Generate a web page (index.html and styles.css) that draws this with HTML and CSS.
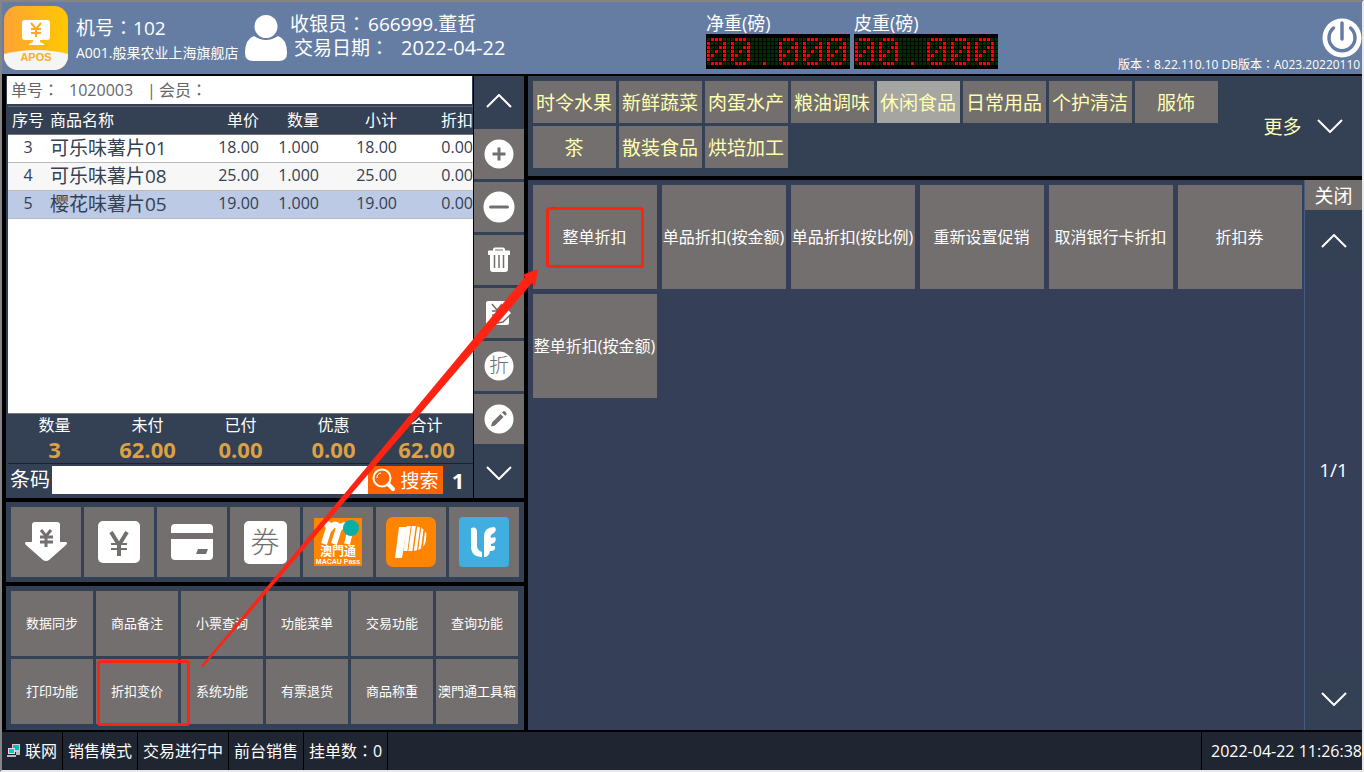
FILE: index.html
```
<!DOCTYPE html>
<html lang="zh-CN">
<head>
<meta charset="utf-8">
<title>APOS 收银台</title>
<link rel="stylesheet" href="styles.css">
</head>
<body>
<svg class="defs" width="0" height="0" aria-hidden="true">
  <defs>
    <pattern id="dots" width="4" height="4" patternUnits="userSpaceOnUse" x="1" y="4"><rect width="3" height="3" fill="#003000"/></pattern>
    <path id="zero" d="M4 0h3v3h-3zM8 0h3v3h-3zM12 0h3v3h-3zM0 4h3v3h-3zM16 4h3v3h-3zM0 8h3v3h-3zM12 8h3v3h-3zM16 8h3v3h-3zM0 12h3v3h-3zM8 12h3v3h-3zM16 12h3v3h-3zM0 16h3v3h-3zM4 16h3v3h-3zM16 16h3v3h-3zM0 20h3v3h-3zM16 20h3v3h-3zM4 24h3v3h-3zM8 24h3v3h-3zM12 24h3v3h-3z"/>
    <g id="led">
      <rect width="144" height="35" fill="#000"/>
      <rect x="1" y="4" width="143" height="28" fill="url(#dots)"/>
      <g fill="#f00"><use href="#zero" x="1" y="4"/><use href="#zero" x="25" y="4"/><rect x="57" y="28" width="3" height="3"/><use href="#zero" x="73" y="4"/><use href="#zero" x="97" y="4"/><use href="#zero" x="121" y="4"/></g>
    </g>
    <path id="chev-up" d="M1 13 13 1 25 13" fill="none" stroke="#fff" stroke-width="2"/>
    <path id="chev-down" d="M1 1 13 13 25 1" fill="none" stroke="#fff" stroke-width="2"/>
    <linearGradient id="sun"><stop offset="0" stop-color="#ffa335"/><stop offset="1" stop-color="#ffc800"/></linearGradient>
    <clipPath id="logo-clip"><rect width="64" height="64" rx="14"/></clipPath>
    <clipPath id="leaf"><path d="M19 9H30Q41 11 41 21Q39 33 27 34H16z"/></clipPath>
  </defs>
</svg>
<div class="page">
  <header class="top">
    <svg class="logo" width="64" height="64" viewBox="0 0 64 64" role="img" aria-label="APOS">
      <g clip-path="url(#logo-clip)">
        <rect width="64" height="64" fill="url(#sun)"/>
        <path d="M0 48Q32 40 64 48V64H0z" fill="#f5f5f5"/>
      </g>
      <rect x="18" y="14" width="28" height="20" rx="3" fill="#fff"/>
      <path d="M29 34h7v2l4 2v1H25v-1l4-2z" fill="#fff"/>
      <path d="M27 17l5 6 5-6M32 23v8M27 23h10M27 27h10" fill="none" stroke="#ffa91f" stroke-width="2"/>
      <text class="logo-text" x="32" y="55" text-anchor="middle">APOS</text>
    </svg>
    <div class="shop">
      <div class="big">机号<span class="colon" lang="zh-Hant">：</span>102</div>
      <div class="small">A001.般果农业上海旗舰店</div>
    </div>
    <svg class="person" width="42" height="46" viewBox="0 0 42 46" aria-hidden="true"><circle cx="21" cy="11.500" r="11.500" fill="#fff"/><path d="M9 21Q21 29 33 21Q42 24 42 38Q42 46 34 46H8Q0 46 0 38Q0 24 9 21z" fill="#fff"/></svg>
    <div class="cashier">
      <div class="big">收银员<span class="colon" lang="zh-Hant">：</span><span class="user">666999.董哲</span></div>
      <div class="big date"><span>交易日期<span class="colon" lang="zh-Hant">：</span></span><time>2022-04-22</time></div>
    </div>
    <div class="scales">
      <div><div class="scale-name">净重(磅)</div><svg width="144" height="35" role="img" aria-label="00.000"><use href="#led"/></svg></div>
      <div><div class="scale-name">皮重(磅)</div><svg width="144" height="35" role="img" aria-label="00.000"><use href="#led"/></svg></div>
    </div>
    <div class="system">
      <button class="power" aria-label="退出"><svg width="40" height="40" viewBox="0 0 40 40"><circle cx="20" cy="20" r="19.500" fill="#fff"/><path d="M11.500 10A13 13 0 1 0 28.500 10M20 5V21" fill="none" stroke="#657da2" stroke-width="3.500" stroke-linecap="round"/></svg></button>
      <div class="version">版本<span class="colon" lang="zh-Hant">：</span>8.22.110.10 DB版本<span class="colon" lang="zh-Hant">：</span>A023.20220110</div>
    </div>
  </header>

  <main class="main">
    <div class="left">
      <section class="sale">
        <div class="cart">
          <div class="order"><span>单号<span class="colon" lang="zh-Hant">：</span></span><span class="order-no">1020003</span><span>|</span><span>会员<span class="colon" lang="zh-Hant">：</span></span></div>
          <div class="goods">
            <table>
              <colgroup><col class="c-no"><col><col class="c-price"><col class="c-qty"><col class="c-sum"><col class="c-off"></colgroup>
              <thead><tr><th>序号</th><th class="name">商品名称</th><th>单价</th><th>数量</th><th>小计</th><th>折扣</th></tr></thead>
              <tbody>
                <tr><td>3</td><td class="name">可乐味薯片01</td><td>18.00</td><td>1.000</td><td>18.00</td><td>0.00</td></tr>
                <tr><td>4</td><td class="name">可乐味薯片08</td><td>25.00</td><td>1.000</td><td>25.00</td><td>0.00</td></tr>
                <tr class="selected"><td>5</td><td class="name">樱花味薯片05</td><td>19.00</td><td>1.000</td><td>19.00</td><td>0.00</td></tr>
              </tbody>
            </table>
          </div>
          <dl class="totals">
            <div><dt>数量</dt><dd>3</dd></div>
            <div><dt>未付</dt><dd>62.00</dd></div>
            <div><dt>已付</dt><dd>0.00</dd></div>
            <div><dt>优惠</dt><dd>0.00</dd></div>
            <div><dt>合计</dt><dd>62.00</dd></div>
          </dl>
          <form class="barcode">
            <label for="code">条码</label><input id="code" type="text">
            <button type="button" class="search"><svg width="24" height="24" viewBox="0 0 24 24" aria-hidden="true"><circle cx="10" cy="10" r="8.500" fill="none" stroke="#fff" stroke-width="2"/><path d="M5 10a5 5 0 0 1 4-5" fill="none" stroke="#fff"/><path d="M16.500 16.500 21 21" stroke="#fff" stroke-width="4" stroke-linecap="round"/></svg>搜索</button>
            <output>1</output>
          </form>
        </div>
        <nav class="tools">
          <button class="arrow" aria-label="上一行"><svg width="26" height="14"><use href="#chev-up"/></svg></button>
          <button aria-label="增加"><svg width="30" height="30"><circle cx="15" cy="15" r="14.500" fill="#fff"/><path d="M8.500 15h13M15 8.500v13" stroke="#736f6e" stroke-width="3"/></svg></button>
          <button aria-label="减少"><svg width="32" height="32"><circle cx="16" cy="16" r="15.500" fill="#fff"/><path d="M7.500 16h17" stroke="#736f6e" stroke-width="3" stroke-linecap="round"/></svg></button>
          <button aria-label="删除"><svg width="24" height="26" viewBox="0 0 24 26"><path d="M7 4V2.500Q7 1.500 8 1.500h8q1 0 1 1V4" fill="none" stroke="#fff" stroke-width="2"/><path d="M2 3.500h20q1 0 1 1V8H1V4.500q0-1 1-1zM3 8h18v14q0 3-3 3H6q-3 0-3-3z" fill="#fff"/><path d="M7.500 8v13M12 8v13M16.500 8v13" stroke="#736f6e" stroke-width="1.500"/></svg></button>
          <button aria-label="改价"><svg width="28" height="26" viewBox="0 0 28 26"><rect x="1" y="1" width="23" height="24" rx="2" fill="#fff"/><path d="M7 4l5 6 5-6M12 10v9M7 11h10M7 15h10" fill="none" stroke="#736f6e" stroke-width="1.500"/><path d="M12 23l2-6 9-8 4 4-9 9z" fill="#fff" stroke="#736f6e" stroke-width="1.500"/></svg></button>
          <button aria-label="折扣"><svg width="30" height="30"><circle cx="15" cy="15" r="14.500" fill="#fff"/><text class="glyph20" x="15" y="22" text-anchor="middle">折</text></svg></button>
          <button aria-label="修改"><svg width="30" height="30"><circle cx="15" cy="15" r="14.500" fill="#fff"/><path d="M7 22.500l1-4 8.500-8.500 3 3L11 21.500zM18 8.500l1-1q1-1 2 0l1.200 1.200q1 1 0 2l-1 1z" fill="#736f6e"/></svg></button>
          <button class="arrow rest" aria-label="下一行"><svg width="26" height="14"><use href="#chev-down"/></svg></button>
        </nav>
      </section>

      <section class="pay">
        <button aria-label="收款"><svg width="42" height="40" viewBox="0 0 42 40"><path d="M10 0h22q3 0 3 3v17h6q2 1 0 3L24 38q-3 2-6 0L1 23q-2-2 0-3h6V3q0-3 3-3z" fill="#fff"/><path d="M16 8l5 6 5-6M21 14v11M15 15h13M15 20h13" fill="none" stroke="#736f6e" stroke-width="3"/></svg></button>
        <button aria-label="现金"><svg width="42" height="42"><rect width="42" height="42" rx="5" fill="#fff"/><path d="M13 11l8 13 8-13" fill="none" stroke="#736f6e" stroke-width="4"/><path d="M21 22v13" stroke="#736f6e" stroke-width="4"/><path d="M13 23h16M13 28h16" stroke="#736f6e" stroke-width="2"/></svg></button>
        <button aria-label="银行卡"><svg width="42" height="36"><rect width="42" height="36" rx="4" fill="#fff"/><path d="M0 9h42v6H0zM27 25h10l-2 5H25z" fill="#736f6e"/></svg></button>
        <button aria-label="券"><svg width="43" height="43"><rect width="43" height="43" rx="5" fill="#fff"/><text class="glyph29" x="21" y="32" text-anchor="middle">券</text></svg></button>
        <button aria-label="澳門通"><svg width="48" height="48"><rect width="48" height="48" fill="#ff8400"/><path d="M10 7Q16 4 15 10L10 26M15 12Q20 4 24 8Q25 10 24 13L20 26M24 12Q30 4 34 9L36 14 33 26" fill="none" stroke="#fff" stroke-width="6"/><circle cx="37" cy="10" r="8" fill="#0aaea8"/><text class="mp-cn" x="24" y="38" text-anchor="middle">澳門通</text><text class="mp-en" x="24" y="46" text-anchor="middle">MACAU Pass</text></svg></button>
        <button aria-label="PayPass"><svg width="50" height="50"><rect width="50" height="50" rx="7" fill="#ff8400"/><path d="M13 10h8l-5 31H9z" fill="#fff"/><g clip-path="url(#leaf)" stroke="#fff" fill="none"><path d="M23 7l-4 30" stroke-width="4"/><path d="M28 7l-4 30" stroke-width="4"/><path d="M33 7l-4 30" stroke-width="3"/><path d="M37 7l-4 30" stroke-width="2.500"/><path d="M41 7l-4 30" stroke-width="2"/></g></svg></button>
        <button aria-label="LF"><svg width="50" height="50"><rect width="50" height="50" rx="4" fill="#40aede"/><path d="M12 11q6-2 6 4v14q0 4 5 6v5q-11 0-11-11zM25 20q0-10 10-10 3 1 1 5l-4 3q-1 2 0 3l4-1q2 3-1 6l-3 1v2h4q1 4-3 5h-2q-1 6-6 6z" fill="#fff"/></svg></button>
      </section>

      <section class="functions">
        <button>数据同步</button><button>商品备注</button><button>小票查询</button><button>功能菜单</button><button>交易功能</button><button>查询功能</button>
        <button>打印功能</button><button>折扣变价</button><button>系统功能</button><button>有票退货</button><button>商品称重</button><button>澳門通工具箱</button>
      </section>
    </div>

    <div class="right">
      <section class="categories">
        <div class="cat-list">
          <button>时令水果</button><button>新鲜蔬菜</button><button>肉蛋水产</button><button>粮油调味</button><button class="current">休闲食品</button><button>日常用品</button><button>个护清洁</button><button>服饰</button>
          <button>茶</button><button>散装食品</button><button>烘培加工</button>
        </div>
        <button class="more">更多<svg width="26" height="14" aria-hidden="true"><use href="#chev-down"/></svg></button>
      </section>
      <section class="actions">
        <div class="action-list">
          <button>整单折扣</button><button>单品折扣(按金额)</button><button>单品折扣(按比例)</button><button>重新设置促销</button><button>取消银行卡折扣</button><button>折扣券</button><button>整单折扣(按金额)</button>
        </div>
        <div class="pager">
          <button class="close">关闭</button>
          <button class="turn" aria-label="上一页"><svg width="26" height="14"><use href="#chev-up"/></svg></button>
          <div class="page-no">1/1</div>
          <button class="turn" aria-label="下一页"><svg width="26" height="14"><use href="#chev-down"/></svg></button>
        </div>
      </section>
    </div>
  </main>

  <footer class="status">
    <div class="net"><svg width="14" height="14" viewBox="0 0 14 14" aria-hidden="true"><path d="M5 0h8v8H5z" fill="#ccc"/><path d="M6 1h6v5H6z" fill="#0bb"/><path d="M1 4h7v6H1z" fill="#ddd"/><path d="M2 5h5v4H2z" fill="#0cc"/><path d="M0 11h9v2H0zM9 8h4v3H9z" fill="#bbb"/></svg>联网</div>
    <div>销售模式</div><div>交易进行中</div><div>前台销售</div><div>挂单数<span class="colon" lang="zh-Hant">：</span>0</div>
    <time>2022-04-22 11:26:38</time>
  </footer>

  <svg class="marks" width="1364" height="772" aria-hidden="true">
    <g fill="none" stroke="#ff2314" stroke-width="3"><rect x="547.500" y="208.500" width="95" height="58" rx="2"/><rect x="98.500" y="661.500" width="90" height="63" rx="2"/></g>
    <path d="M538 269L535 287 532 283 203 667 201 666 525 277 522 275z" fill="#ff2314"/>
  </svg>
</div>
</body>
</html>
```
FILE: styles.css
```
* { box-sizing: border-box; }
body { margin: 0; background: #000; color: #fff; font-family: "Open Sans", "Noto Sans CJK SC", sans-serif; font-size: 16px; }
button { margin: 0; padding: 0; border: 0; color: #fff; background: #736f6e; font-family: inherit; font-size: 16px; white-space: nowrap; display: flex; align-items: center; justify-content: center; }
svg { display: block; flex: none; }
.defs { position: absolute; }
.colon { font-family: "Noto Sans CJK TC", sans-serif; line-height: 1; }
.page { position: relative; height: 100vh; display: flex; flex-direction: column; overflow: hidden; border: 2px solid #e8e8e8; border-top-color: #858585; border-left-color: #858585; }

.top { height: 74px; flex: none; display: flex; background: #657da2; border-bottom: 2px solid #000; white-space: nowrap; }
.logo { margin: 4px 8px 0 2px; }
.logo-text { font: bold 11px "Liberation Sans", sans-serif; fill: #fbae24; }
.shop { width: 169px; padding-top: 14px; }
.big { font-size: 19px; line-height: 24px; }
.small { font-size: 14px; line-height: 26px; }
.person { margin-top: 13px; }
.cashier { padding: 10px 0 0 3px; }
.user { margin-left: 2px; }
.date { display: flex; gap: 12px; padding-left: 4px; }
.date time { font-size: 20px; }
.scales { display: flex; gap: 4px; margin-left: auto; padding-top: 10px; }
.scale-name { font-size: 18px; line-height: 22px; }
.system { width: 244px; margin-left: 120px; display: flex; flex-direction: column; align-items: flex-end; padding-top: 16px; overflow: hidden; }
.power { background: none; }
.version { align-self: flex-start; font-size: 12px; line-height: 14px; }

.main { flex: 1; min-height: 0; display: grid; grid-template-columns: 518fr 834fr; gap: 4px; padding-left: 4px; }
.left, .right { min-width: 0; min-height: 0; display: flex; flex-direction: column; gap: 4px; }
.sale { flex: 1; min-height: 0; display: flex; gap: 1px; }
.cart { flex: 1; min-width: 0; display: flex; flex-direction: column; background: #344053; }
.order { margin: 0 1px 2px; padding: 0 4px; height: 28px; flex: none; background: #fff; color: #666; display: flex; line-height: 28px; }
.order-no { margin: 0 14px 0 10px; }
.order > :last-child { margin-left: 3px; }
.goods { flex: 1; min-height: 0; margin-left: 2px; overflow: hidden; background: #fff; border-top: 1px solid #666; border-bottom: 1px solid #777; }
table { width: 100%; table-layout: fixed; border-collapse: separate; border-spacing: 0; }
.c-no { width: 40px; }
.c-price { width: 73px; }
.c-qty { width: 60px; }
.c-sum { width: 78px; }
.c-off { width: 76px; }
th, td { height: 28px; padding: 0; text-align: right; line-height: 27px; white-space: nowrap; }
th { font-weight: 400; background: #344053; border-bottom: 1px solid #777; }
td { padding-bottom: 3px; line-height: 24px; color: #344053; border-bottom: 1px solid #bbb; }
th:first-child, td:first-child { text-align: center; }
th.name, td.name { text-align: left; padding-left: 2px; }
td.name { font-size: 19px; padding-bottom: 0; line-height: 27px; }
tr:nth-child(2) td { background: #f7f7f7; }
tr.selected td { background: #bccae5; }
.totals { height: 50px; flex: none; margin: 0 0 0 2px; display: grid; grid-template-columns: repeat(5, 1fr); text-align: center; border-bottom: 1px solid #1b222c; }
.totals dt { line-height: 23px; }
.totals dd { margin: 0; font-size: 22px; font-weight: 700; line-height: 24px; color: #dba146; }
.barcode { height: 34px; flex: none; display: flex; align-items: center; padding: 0 0 2px 4px; }
.barcode label { width: 42px; font-size: 20px; line-height: 28px; white-space: nowrap; }
.barcode input { flex: 1; min-width: 0; height: 28px; padding: 0 4px; border: 0; border-radius: 0; background: #fff; font-size: 18px; }
.search { width: 75px; height: 28px; gap: 4px; background: #ff6400; font-size: 19px; }
.barcode output { width: 30px; text-align: center; font-size: 22px; font-weight: 700; line-height: 28px; }
.tools { width: 50px; display: flex; flex-direction: column; gap: 3px; background: #344053; }
.tools button { height: 50px; flex: none; }
.tools .arrow { background: none; }
.tools .rest { flex: 1; }
.glyph20 { font: 300 20px "Noto Sans CJK SC", sans-serif; fill: #736f6e; }
.glyph29 { font: 300 29px "Noto Sans CJK SC", sans-serif; fill: #736f6e; }
.mp-cn { font: bold 12px "Noto Sans CJK TC", sans-serif; fill: #fff; }
.mp-en { font: bold 7px "Liberation Sans", sans-serif; fill: #fff; }

.pay { padding: 5px; display: grid; grid-template-columns: repeat(7, 1fr); gap: 3px; background: #344053; }
.pay button { height: 70px; }
.functions { padding: 5px 6px 6px 5px; display: grid; grid-template-columns: repeat(6, 1fr); gap: 3px; background: #344053; }
.functions button { min-width: 0; height: 65px; padding-bottom: 2px; font-size: 13px; }

.categories { min-height: 100px; padding: 5px; display: flex; justify-content: space-between; background: #344053; }
.cat-list { flex: 1; display: grid; grid-template-columns: repeat(auto-fill, 83px); grid-auto-rows: 42px; gap: 3px; }
.cat-list button { padding: 0 1px 1px 0; color: #ffffb4; font-size: 19px; }
.cat-list .current { background: #a5a5a1; }
.more { width: 92px; margin-right: 8px; gap: 15px; background: none; color: #ffffb4; font-size: 19px; }
.actions { flex: 1; min-height: 0; display: flex; background: #354058; }
.action-list { flex: 1; padding: 5px 0 5px 5px; display: grid; grid-template-columns: repeat(auto-fill, 124px); grid-auto-rows: 104px; gap: 5px; align-content: start; }
.action-list button { padding: 0 1px 2px 0; }
.pager { width: 58px; display: flex; flex-direction: column; border-left: 1px solid #465b83; }
.close { height: 30px; font-size: 19px; }
.turn { height: 62px; background: #344053; }
.page-no { flex: 1; display: flex; align-items: center; justify-content: center; font-size: 19px; }

.status { height: 40px; flex: none; display: flex; border-top: 2px solid #000; background: #1f2631; line-height: 38px; white-space: nowrap; }
.status > div { padding: 0 5px; border-right: 1px solid #000; }
.status .net { display: flex; align-items: center; gap: 4px; }
.status time { width: 161px; margin-left: auto; padding-left: 9px; border-left: 1px solid #000; overflow: hidden; }
.marks { position: absolute; top: -2px; left: -2px; pointer-events: none; }
```
